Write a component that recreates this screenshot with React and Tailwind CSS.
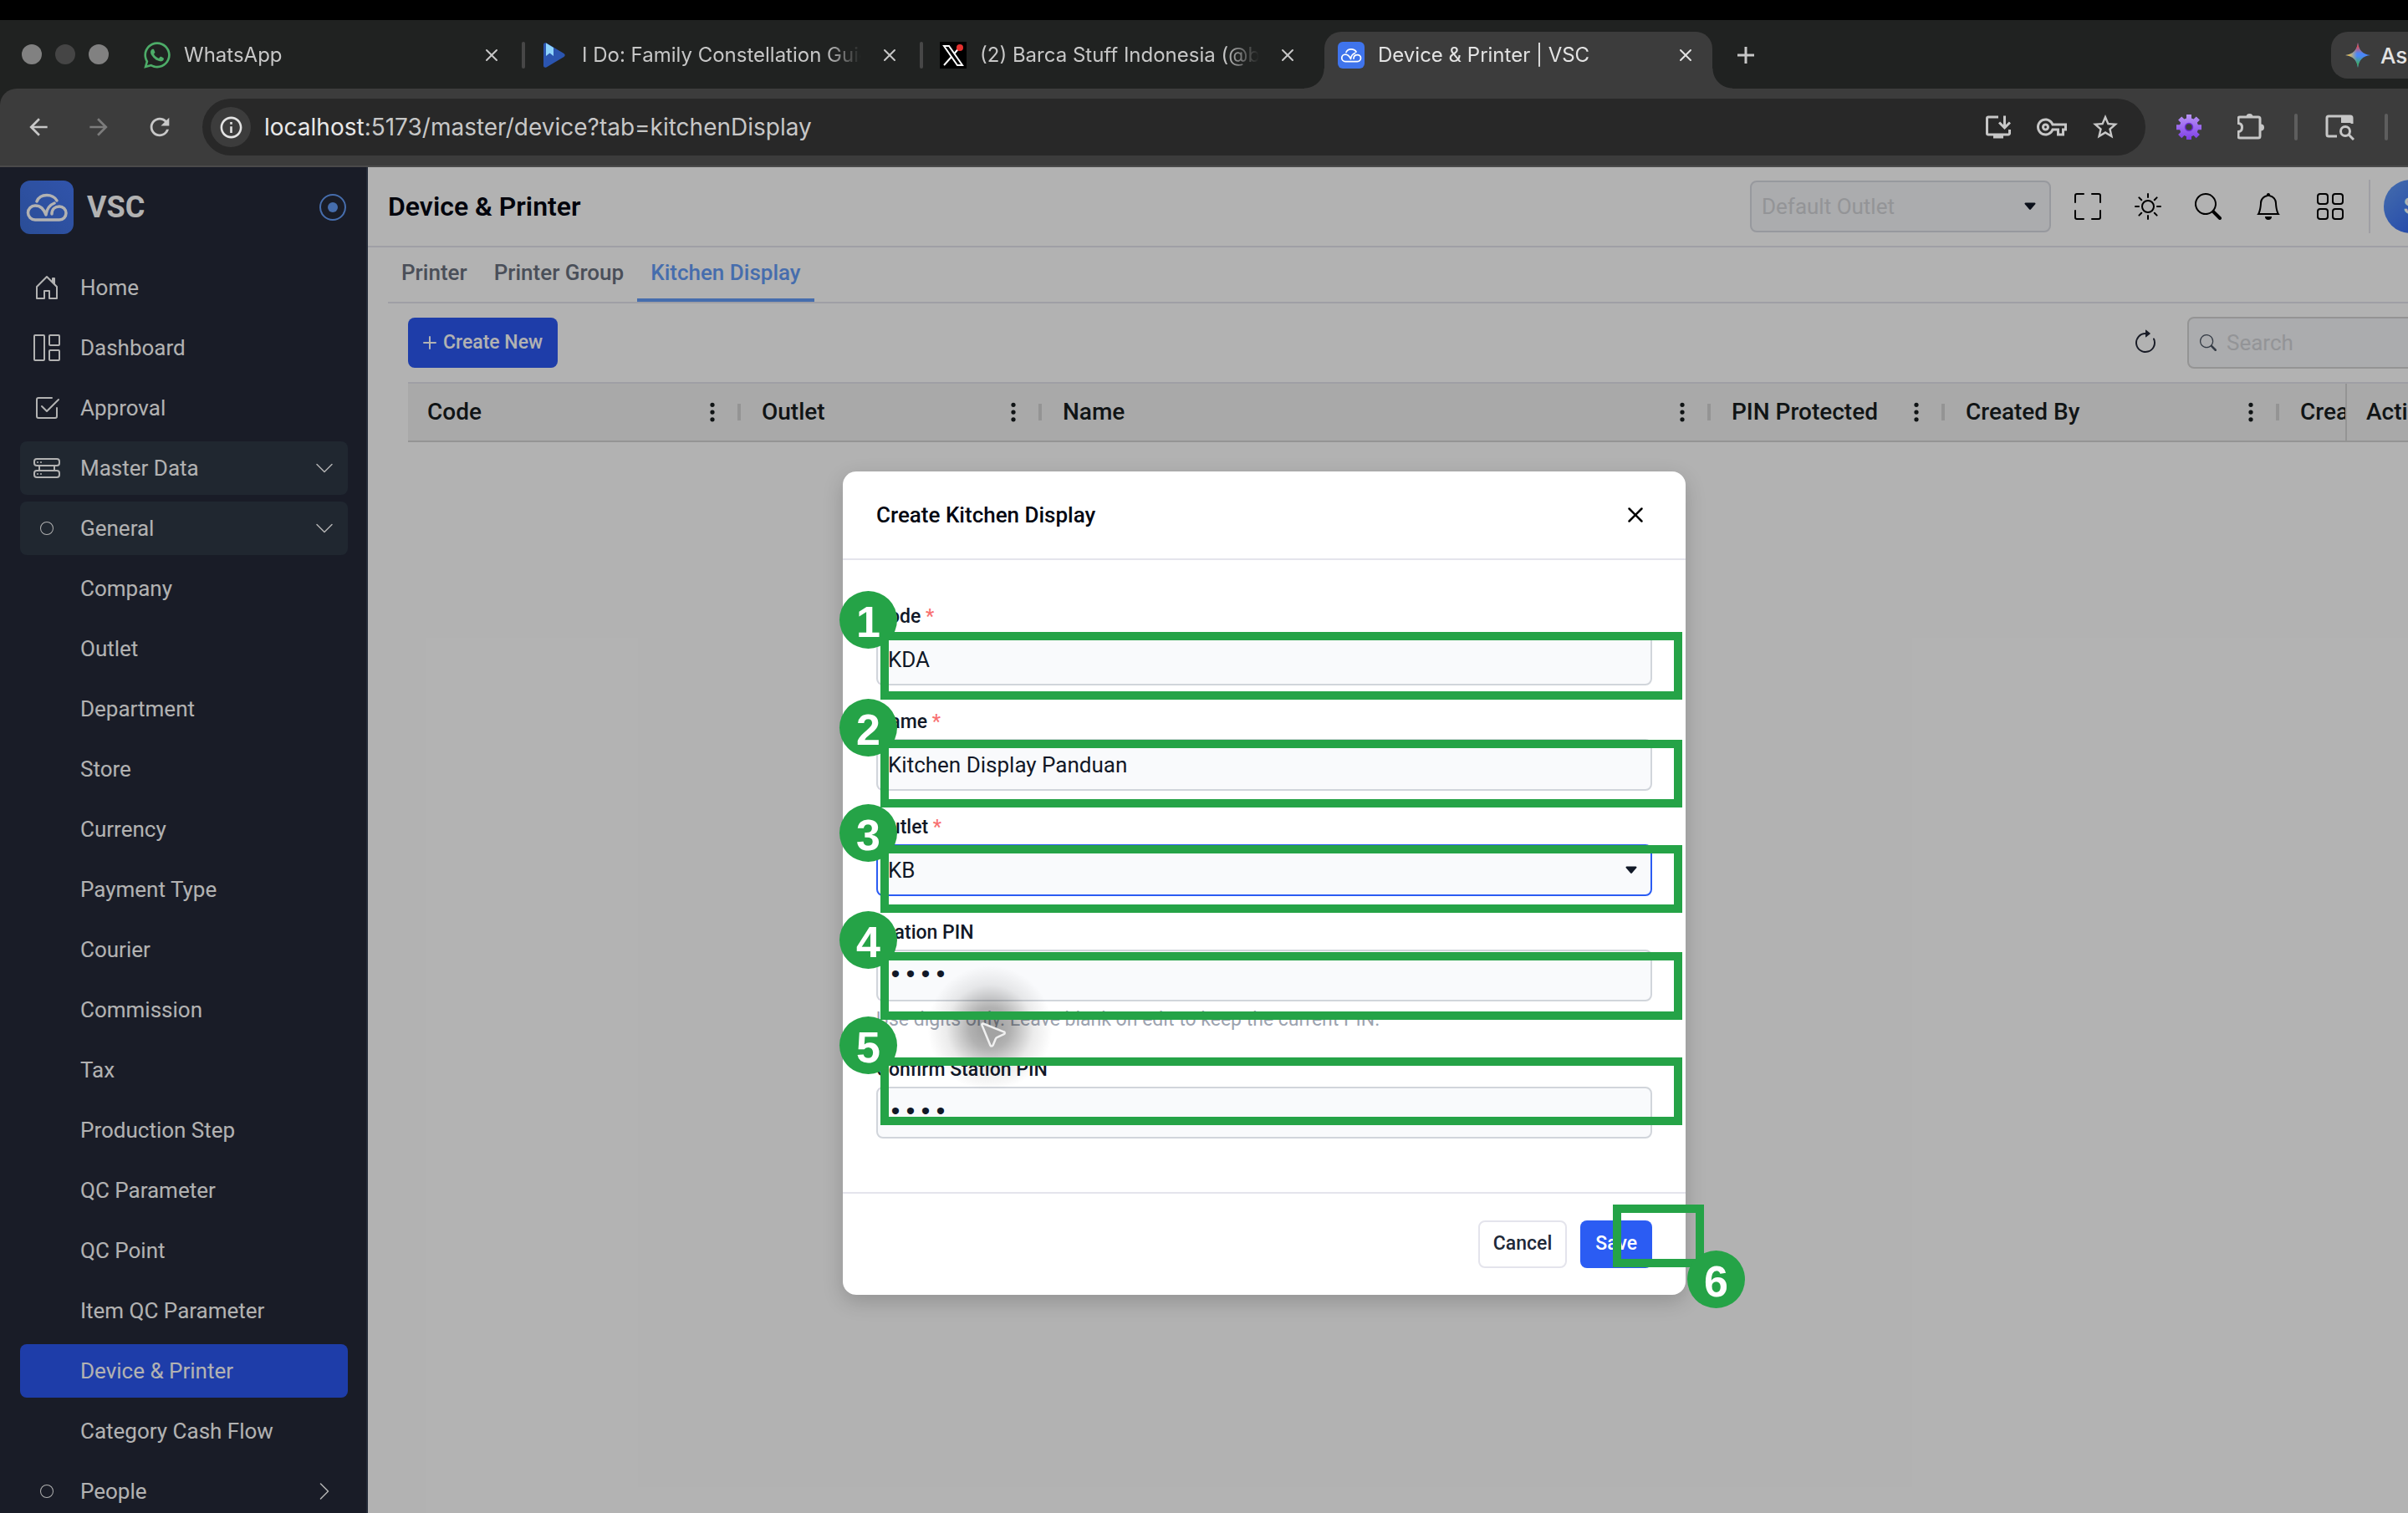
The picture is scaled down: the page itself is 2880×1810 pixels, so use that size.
import { useState } from 'react'
import {
  BsArrowClockwise,
  BsBell,
  BsCaretDownFill,
  BsCheck2Square,
  BsChevronDown,
  BsChevronRight,
  BsCircle,
  BsFullscreen,
  BsHddRack,
  BsHouseDoor,
  BsPlus,
  BsRecordCircle,
  BsSearch,
  BsSun,
  BsThreeDotsVertical,
  BsX,
} from 'react-icons/bs'
import { FaWhatsapp } from 'react-icons/fa'
import {
  MdArrowBack,
  MdArrowForward,
  MdInfoOutline,
  MdOutlineInstallDesktop,
  MdOutlineVpnKey,
  MdRefresh,
  MdStarBorder,
} from 'react-icons/md'

const menu = [
  { label: 'Home', icon: BsHouseDoor },
  { label: 'Dashboard', icon: DashboardIcon },
  { label: 'Approval', icon: BsCheck2Square },
  { label: 'Master Data', icon: BsHddRack, open: true },
  { label: 'General', dot: true, open: true },
  { label: 'Company' },
  { label: 'Outlet' },
  { label: 'Department' },
  { label: 'Store' },
  { label: 'Currency' },
  { label: 'Payment Type' },
  { label: 'Courier' },
  { label: 'Commission' },
  { label: 'Tax' },
  { label: 'Production Step' },
  { label: 'QC Parameter' },
  { label: 'QC Point' },
  { label: 'Item QC Parameter' },
  { label: 'Device & Printer', active: true },
  { label: 'Category Cash Flow' },
  { label: 'People', dot: true, closed: true },
]

const columns = [
  { label: 'Code', width: 'w-[400px]' },
  { label: 'Outlet', width: 'w-[360px]' },
  { label: 'Name', width: 'w-[800px]' },
  { label: 'PIN Protected', width: 'w-[280px]' },
  { label: 'Created By', width: 'w-[400px]' },
]

const steps = [
  { n: 1, box: 'top-[192px]', badge: 'top-[143px]' },
  { n: 2, box: 'top-[321px]', badge: 'top-[272px]' },
  { n: 3, box: 'top-[447px]', badge: 'top-[398px]' },
  { n: 4, box: 'top-[575px]', badge: 'top-[526px]' },
  { n: 5, box: 'top-[701px]', badge: 'top-[652px]' },
]

function DashboardIcon({ size }) {
  return (
    <svg width={size} height={size} viewBox="0 0 32 32" fill="none" stroke="currentColor" strokeWidth="2">
      <rect x="1" y="1" width="12" height="30" rx="1" />
      <rect x="19" y="1" width="12" height="12" rx="1" />
      <rect x="19" y="19" width="12" height="12" rx="1" />
    </svg>
  )
}

function AppsIcon() {
  return (
    <svg width="32" height="32" viewBox="0 0 32 32" fill="none" stroke="currentColor" strokeWidth="2">
      <rect x="1" y="1" width="12" height="12" rx="3" />
      <rect x="19" y="1" width="12" height="12" rx="3" />
      <rect x="1" y="19" width="12" height="12" rx="3" />
      <rect x="19" y="19" width="12" height="12" rx="3" />
    </svg>
  )
}

function CloudLogo({ size }) {
  return (
    <svg width={size} height={size} viewBox="0 0 64 64" fill="none" stroke="currentColor" strokeWidth="3.500" strokeLinecap="round" strokeLinejoin="round">
      <path d="M20 25c2-5 7-7.500 12-7.500s10 2.500 12 6.500" />
      <path d="M38 40c0-6 4-9 9-9a8 8 0 0 1 0 16H18a8.500 8.500 0 0 1 0-17c7 0 10 4 13 11 1-8 5-12 10-14" />
    </svg>
  )
}

function PlayFavicon() {
  return (
    <svg width="32" height="32" viewBox="0 0 32 32">
      <path d="M2 3.500C2 1.500 4 .7 5.500 1.600l21 12.400c1.600 1 1.600 3 0 4l-21 12.400C4 31.300 2 30.500 2 28.500z" fill="#2b55b0" />
      <path d="M5 1.500 14 7v10l-4.500-3.500L5 17z" fill="#8fd4fb" />
    </svg>
  )
}

function XFavicon() {
  return (
    <svg width="32" height="32" viewBox="0 0 32 32" fill="none">
      <rect width="32" height="32" fill="#000" />
      <path d="M5 5h6l16 23h-6z" stroke="#fff" strokeWidth="2" />
      <path d="M25 5 17.500 14M14 18 5 28" stroke="#fff" strokeWidth="2" />
      <circle cx="24" cy="7" r="4" fill="#e5312f" />
    </svg>
  )
}

function GeminiIcon() {
  return (
    <svg width="30" height="30" viewBox="0 0 30 30" className="shrink-0">
      <defs>
        <linearGradient id="spark-top" x1="15" y1="0" x2="15" y2="13" gradientUnits="userSpaceOnUse">
          <stop offset="0.3" stopColor="#ea4a45" />
          <stop offset="1" stopColor="#ea4a45" stopOpacity="0" />
        </linearGradient>
        <linearGradient id="spark-left" x1="1" y1="15" x2="14" y2="15" gradientUnits="userSpaceOnUse">
          <stop offset="0.2" stopColor="#f6c23c" />
          <stop offset="1" stopColor="#f6c23c" stopOpacity="0" />
        </linearGradient>
        <linearGradient id="spark-bottom" x1="15" y1="30" x2="15" y2="16" gradientUnits="userSpaceOnUse">
          <stop offset="0.3" stopColor="#3fae5a" />
          <stop offset="1" stopColor="#3fae5a" stopOpacity="0" />
        </linearGradient>
        <path id="spark" d="M15 0c1 9 6 14 15 15-9 1-14 6-15 15-1-9-6-14-15-15C9 14 14 9 15 0z" />
      </defs>
      <use href="#spark" fill="#4a86f8" />
      <use href="#spark" fill="url(#spark-bottom)" />
      <use href="#spark" fill="url(#spark-top)" />
      <use href="#spark" fill="url(#spark-left)" />
    </svg>
  )
}

function GearIcon() {
  return (
    <svg width="32" height="32" viewBox="0 0 32 32">
      <defs>
        <linearGradient id="gear" x1="0" y1="0" x2="0" y2="32" gradientUnits="userSpaceOnUse">
          <stop offset="0" stopColor="#bb97f6" />
          <stop offset="1" stopColor="#7c3be6" />
        </linearGradient>
      </defs>
      <path
        fill="url(#gear)"
        d="M13 1h6v4.400l2.600 1.100 3.100-3.100 4.200 4.200-3.100 3.100 1.100 2.600H31v6h-4.100l-1.100 2.600 3.100 3.100-4.200 4.200-3.100-3.100-2.600 1.100V31h-6v-3.800l-2.600-1.100-3.100 3.100-4.200-4.200 3.100-3.100-1.100-2.600H1v-6h4.100l1.100-2.600-3.100-3.100 4.200-4.200 3.100 3.100L13 5.400z"
      />
      <circle cx="16" cy="16" r="4.500" fill="#3c3c3c" stroke="#6d2bd6" strokeWidth="1.500" />
    </svg>
  )
}

function ExtensionIcon() {
  return (
    <svg width="32" height="32" viewBox="0 0 32 32">
      <path d="M3 4h22a2 2 0 0 1 2 2v21a2 2 0 0 1-2 2H3a2 2 0 0 1-2-2v-5.500c3 0 4.500-2 4.500-5s-1.500-5-4.500-5V6a2 2 0 0 1 2-2z" fill="none" stroke="currentColor" strokeWidth="3" strokeLinejoin="round" />
      <path d="M10.500 4a4 4 0 0 1 8 0zM28 12.500a4 4 0 0 1 0 8z" fill="currentColor" />
    </svg>
  )
}

function SidePanelSearchIcon() {
  return (
    <svg width="36" height="32" viewBox="0 0 36 32" fill="none" stroke="currentColor" strokeWidth="3">
      <path d="M15 27H5a2 2 0 0 1-2-2V5a2 2 0 0 1 2-2h26a2 2 0 0 1 2 2v7" />
      <path d="M20 2h13v9H20z" fill="currentColor" stroke="none" />
      <circle cx="25" cy="21" r="5.500" />
      <path d="m29 25 6 6" />
    </svg>
  )
}

function BrowserTab({ icon, title, active, divider }) {
  return (
    <div className={`relative flex h-[68px] w-[476px] shrink-0 items-center pl-4 ${active ? 'text-[#e3e3e3]' : 'text-[#c7c7c7]'}`}>
      {active && (
        <div className="absolute inset-y-0 left-0 w-[464px] rounded-t-[20px] bg-[#3c3c3c] before:absolute before:bottom-0 before:-left-6 before:size-6 before:bg-[radial-gradient(circle_at_0_0,transparent_23px,#3c3c3c_24px)] after:absolute after:-right-6 after:bottom-0 after:size-6 after:bg-[radial-gradient(circle_at_100%_0,transparent_23px,#3c3c3c_24px)]" />
      )}
      <div className="relative flex min-w-0 flex-1 items-center pb-3">
        <span className="flex size-8 shrink-0 items-center justify-center">{icon}</span>
        <span className="ml-4 w-[334px] overflow-hidden text-2xl whitespace-nowrap [mask-image:linear-gradient(to_right,#000_292px,transparent_334px)]">{title}</span>
        <button type="button" aria-label="Close tab" className="ml-[18px]">
          <BsX size={32} />
        </button>
      </div>
      {divider && <span className="absolute top-3 right-1 h-8 w-1 rounded-full bg-[#474747]" />}
    </div>
  )
}

function BrowserChrome() {
  return (
    <div className="font-['Inter',sans-serif]">
      <div className="h-6 bg-black" />
      <div className="flex h-[82px] bg-[#202221] pt-[14px]">
        <div className="flex w-[156px] shrink-0 gap-4 pt-[15px] pl-[26px]">
          <span className="size-6 rounded-full bg-[#818181]" />
          <span className="size-6 rounded-full bg-[#454545]" />
          <span className="size-6 rounded-full bg-[#818181]" />
        </div>
        <BrowserTab icon={<FaWhatsapp size={36} className="text-[#4dac68]" />} title="WhatsApp" divider />
        <BrowserTab icon={<PlayFavicon />} title="I Do: Family Constellation Guide" divider />
        <BrowserTab icon={<XFavicon />} title="(2) Barca Stuff Indonesia (@barcastuff)" />
        <BrowserTab
          icon={
            <span className="flex size-8 items-center justify-center rounded-md bg-[#3f74ec] text-white">
              <CloudLogo size={32} />
            </span>
          }
          title="Device & Printer | VSC"
          active
        />
        <button type="button" aria-label="New tab" className="ml-1.5 flex h-14 w-[44px] items-center justify-center text-[#c7c7c7]">
          <svg width="22" height="22" viewBox="0 0 22 22" stroke="currentColor" strokeWidth="3">
            <path d="M11 1v20M1 11h20" />
          </svg>
        </button>
        <button type="button" className="mr-6 ml-auto flex h-14 w-[212px] shrink-0 items-center gap-3 rounded-[20px] bg-[#3c3c3c] pl-[17px] text-[26px] font-medium whitespace-nowrap text-[#e3e3e3]">
          <GeminiIcon />
          Ask Gemini
        </button>
      </div>

      <div className="bg-[#202221]">
        <div className="flex h-[94px] items-center rounded-tl-[20px] border-b-2 border-[#4a4a4a] bg-[#3c3c3c] text-[#c7c7c7]">
          <div className="flex w-[242px] shrink-0 items-center gap-10 pl-[30px]">
            <button type="button" aria-label="Back"><MdArrowBack size={32} /></button>
            <button type="button" aria-label="Forward" className="text-[#7c7c7c]"><MdArrowForward size={32} /></button>
            <button type="button" aria-label="Reload"><MdRefresh size={34} /></button>
          </div>
          <div className="flex h-[68px] flex-1 items-center rounded-full bg-[#282828] pr-[30px] pl-2.5">
            <span className="flex size-12 items-center justify-center rounded-full bg-[#3c3c3c] text-[#e3e3e3]">
              <MdInfoOutline size={31} />
            </span>
            <p className="ml-4 flex-1 text-[28px] text-[#c7c7c7]">
              <span className="text-[#e8e8e8]">localhost</span>:5173/master/device?tab=kitchenDisplay
            </p>
            <div className="flex items-center gap-7">
              <MdOutlineInstallDesktop size={36} />
              <MdOutlineVpnKey size={36} />
              <MdStarBorder size={36} />
            </div>
          </div>
          <div className="flex w-[458px] shrink-0 items-center pl-9">
            <GearIcon />
            <span className="ml-[42px]"><ExtensionIcon /></span>
            <span className="ml-9 h-8 w-1 rounded-full bg-[#5e5e5e]" />
            <span className="ml-8"><SidePanelSearchIcon /></span>
            <span className="ml-9 h-8 w-1 rounded-full bg-[#5e5e5e]" />
          </div>
        </div>
      </div>
    </div>
  )
}

function Sidebar() {
  return (
    <aside className="w-[440px] shrink-0 border-r-2 border-[#323b4e] bg-[#242938] pt-4 pr-[22px] pl-6 text-white">
      <div className="flex h-16 items-center">
        <span className="flex size-16 items-center justify-center rounded-xl bg-linear-to-tr from-[#3d6fd8] to-[#4678f5]">
          <CloudLogo size={64} />
        </span>
        <span className="ml-4 text-4xl font-bold">VSC</span>
        <button type="button" aria-label="Pin sidebar" className="mr-0.5 ml-auto text-[#659df8]">
          <BsRecordCircle size={32} />
        </button>
      </div>
      <nav className="mt-8 flex flex-col gap-2">
        {menu.map((item) => {
          const Icon = item.icon
          return (
            <a
              key={item.label}
              href="#"
              className={`flex h-16 items-center rounded-lg px-4 text-[26px] ${
                item.active ? 'bg-[#2b58f2]' : item.open ? 'bg-[#2e3846]' : ''
              }`}
            >
              <span className="flex w-8 justify-center">
                {Icon && <Icon size={32} />}
                {item.dot && <BsCircle size={16} />}
              </span>
              <span className="ml-6 flex-1">{item.label}</span>
              {item.open && <BsChevronDown size={24} />}
              {item.closed && <BsChevronRight size={24} />}
            </a>
          )
        })}
      </nav>
    </aside>
  )
}

function Header() {
  return (
    <header className="flex h-24 items-center border-b-2 border-[#e4e4ec] pl-6">
      <h1 className="flex-1 text-[32px] font-semibold text-[#030712]">Device &amp; Printer</h1>
      <div className="relative">
        <select aria-label="Default outlet" className="h-[62px] w-[360px] appearance-none rounded-lg border-2 border-[#d9dbe2] bg-[#f5f6f9] px-3 text-[26px] text-[#d3d5d8]">
          <option>Default Outlet</option>
        </select>
        <BsCaretDownFill size={18} className="pointer-events-none absolute top-[22px] right-4 text-[#111827]" />
      </div>
      <div className="ml-7 flex items-center gap-10 text-black">
        <button type="button" aria-label="Fullscreen"><BsFullscreen size={32} /></button>
        <button type="button" aria-label="Theme"><BsSun size={32} /></button>
        <button type="button" aria-label="Search"><BsSearch size={32} /></button>
        <button type="button" aria-label="Notifications"><BsBell size={32} /></button>
        <button type="button" aria-label="Apps" className="pl-0.5"><AppsIcon /></button>
      </div>
      <div className="ml-[30px] flex h-16 w-[191px] items-center border-l-2 border-[#e4e4ec] pl-4">
        <span className="flex size-16 items-center justify-center rounded-full bg-linear-to-br from-[#659df8] to-[#2b58f2] text-[28px] font-medium text-white">S</span>
      </div>
    </header>
  )
}

function DeviceTable() {
  return (
    <div className="mx-6 border-y-2 border-t-[#e4e4ec] border-b-[#d4d4d4] bg-[#f2f2f2]">
      <table className="w-full table-fixed text-left text-[28px] text-[#181d1f]">
        <thead>
          <tr className="h-[68px]">
            {columns.map((col) => (
              <th key={col.label} className={`${col.width} p-0 font-medium`}>
                <div className="flex items-center pr-[2px] pl-[23px]">
                  <span className="flex-1 whitespace-nowrap">{col.label}</span>
                  <BsThreeDotsVertical size={28} className="mr-4" />
                  <span className="h-5 w-1 bg-[#d4d4d4]" />
                </div>
              </th>
            ))}
            <th className="overflow-hidden p-0 pl-[23px] font-medium whitespace-nowrap">Created At</th>
            <th className="w-[194px] border-l-2 border-[#d4d4d4] p-0 pl-[23px] font-medium">Action</th>
          </tr>
        </thead>
      </table>
    </div>
  )
}

function DevicePage() {
  return (
    <main className="min-w-0 flex-1 bg-white">
      <Header />
      <div className="pl-6">
        <div className="flex h-[67px] border-b-2 border-[#e4e4ec] text-[26px] font-medium text-[#6b7280]">
          <button type="button" className="px-4 pb-1">Printer</button>
          <button type="button" className="px-4 pb-1">Printer Group</button>
          <button type="button" className="border-b-4 border-[#659df8] px-4 text-[#659df8]">Kitchen Display</button>
        </div>
        <div className="flex h-[94px] items-center px-6">
          <button type="button" className="flex h-[60px] items-center rounded-lg bg-[#2b58f2] pr-[18px] pl-2.5 text-[23px] font-medium text-white">
            <BsPlus size={32} />
            Create New
          </button>
          <button type="button" aria-label="Refresh" className="mr-[34px] ml-auto text-[#242938]">
            <BsArrowClockwise size={32} />
          </button>
          <label className="flex h-[62px] w-[384px] items-center gap-3 rounded-lg border-2 border-[#d4d4d4] bg-[#f5f6f9] px-[13px] text-[#4b5563]">
            <BsSearch size={20} />
            <input type="search" placeholder="Search" className="min-w-0 flex-1 text-[26px] outline-none placeholder:text-[#d3d5d8]" />
          </label>
        </div>
        <DeviceTable />
      </div>
    </main>
  )
}

function Field({ id, label, required, hint, children }) {
  return (
    <div className="flex flex-col">
      <label htmlFor={id} className="mb-1 text-[23px] leading-8 font-medium text-[#111827]">
        {label} {required && <span className="text-[#f87171]">*</span>}
      </label>
      {children}
      {hint && <p className="mt-1.5 text-[23px] leading-8 text-[#9ca3af]">{hint}</p>}
    </div>
  )
}

function Pointer() {
  return (
    <div className="pointer-events-none absolute top-[586px] left-24 flex size-[160px] items-center justify-center bg-[radial-gradient(circle,rgba(0,0,0,0.4)_0%,rgba(0,0,0,0.3)_22%,rgba(0,0,0,0.08)_46%,transparent_66%)]">
      <svg width="36" height="36" viewBox="0 0 36 36" className="mt-4 ml-2" fill="#a3a3a3" stroke="#f0f0f0" strokeWidth="2.500" strokeLinejoin="round">
        <path d="M6 4.500C4.800 4.200 4 5 4.400 6.200l10 24.300c.6 1.500 2.600 1.400 3.200 0l3.200-7.700c.4-1 1-1.600 2-2l8-3.600c1.400-.7 1.200-2.500-.3-2.900z" />
      </svg>
    </div>
  )
}

function StepMarks() {
  const badge = "absolute flex size-[69px] items-center justify-center rounded-full bg-[#25a347] pt-1 font-['Liberation_Sans',sans-serif] text-[52px] leading-none font-bold text-white"
  return (
    <>
      {steps.map((step) => (
        <div key={step.n}>
          <div className={`pointer-events-none absolute left-[45px] h-[81px] w-[959px] border-[10px] border-[#25a347] ${step.box}`} />
          <span className={`${badge} -left-1 ${step.badge}`}>{step.n}</span>
        </div>
      ))}
      <div className="pointer-events-none absolute top-[877px] left-[921px] h-[75px] w-[109px] border-[10px] border-[#25a347]" />
      <span className={`${badge} top-[932px] left-[1010px]`}>6</span>
    </>
  )
}

function CreateModal() {
  const [form, setForm] = useState({ code: 'KDA', name: 'Kitchen Display Panduan', outlet: 'KB', pin: '1234', confirm: '1234' })
  const update = (key) => (e) => setForm({ ...form, [key]: e.target.value })
  const control = 'h-[62px] w-full rounded-lg border-2 bg-[#f9fafc] px-3 text-[#111827] outline-none'
  const pin = `${control} border-[#d1d5db] font-['Liberation_Mono',monospace] text-3xl`

  return (
    <div role="dialog" aria-labelledby="modal-title" className="relative w-[1008px] rounded-2xl bg-white shadow-[0_8px_24px_rgba(0,0,0,0.18)]">
      <div className="flex h-[106px] items-center justify-between border-b-2 border-[#e4e4ec] px-10">
        <h2 id="modal-title" className="text-[26px] font-medium text-[#030712]">Create Kitchen Display</h2>
        <button type="button" aria-label="Close"><BsX size={40} /></button>
      </div>

      <form className="flex flex-col gap-7 px-10 pt-[52px] pb-16">
        <Field id="code" label="Code" required>
          <input id="code" value={form.code} onChange={update('code')} className={`${control} border-[#d1d5db] text-[26px]`} />
        </Field>
        <Field id="name" label="Name" required>
          <input id="name" value={form.name} onChange={update('name')} className={`${control} border-[#d1d5db] text-[26px]`} />
        </Field>
        <Field id="outlet" label="Outlet" required>
          <div className="relative">
            <select id="outlet" value={form.outlet} onChange={update('outlet')} className={`${control} appearance-none border-[#2b5cf3] text-[26px]`}>
              <option>KB</option>
            </select>
            <BsCaretDownFill size={18} className="pointer-events-none absolute top-[22px] right-4 text-[#111827]" />
          </div>
        </Field>
        <Field id="pin" label="Station PIN" hint="Use digits only. Leave blank on edit to keep the current PIN.">
          <input id="pin" type="password" value={form.pin} onChange={update('pin')} className={pin} />
        </Field>
        <Field id="confirm" label="Confirm Station PIN">
          <input id="confirm" type="password" value={form.confirm} onChange={update('confirm')} className={pin} />
        </Field>
      </form>

      <div className="flex justify-end gap-4 border-t-2 border-[#e4e4ec] px-10 py-8 text-[23px] font-medium">
        <button type="button" className="h-[57px] rounded-lg border-2 border-[#e4e4ec] px-4 text-[#1f2937]">Cancel</button>
        <button type="button" className="h-[57px] rounded-lg bg-[#2b5cf3] px-[18px] text-white">Save</button>
      </div>

      <Pointer />
      <StepMarks />
    </div>
  )
}

export default function App() {
  return (
    <div className="flex h-screen flex-col overflow-hidden bg-black">
      {/* the window runs past the right edge of the screen */}
      <div className="flex min-h-0 w-[calc(100%+144px)] flex-1 flex-col">
        <BrowserChrome />
        <div className="relative flex min-h-0 flex-1 overflow-hidden font-['Roboto',sans-serif]">
          <Sidebar />
          <DevicePage />
          <div className="absolute inset-0 bg-black/30" />
          <div className="absolute inset-x-0 top-0 flex justify-center pt-[364px]">
            <CreateModal />
          </div>
        </div>
      </div>
    </div>
  )
}
